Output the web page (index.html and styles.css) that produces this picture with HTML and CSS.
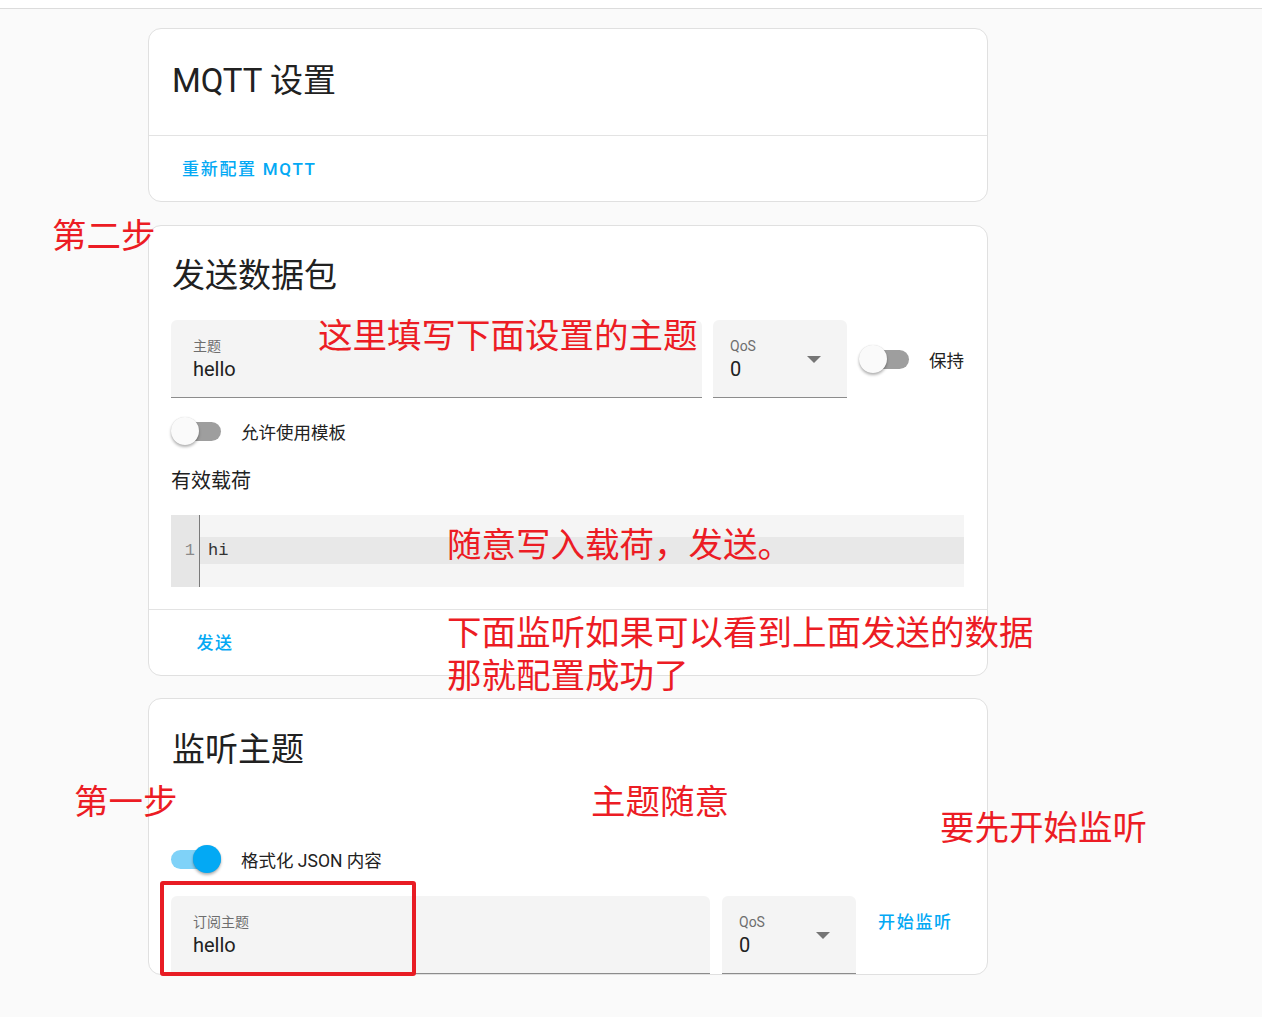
FILE: index.html
```html
<!DOCTYPE html>
<html lang="zh-CN">
<head>
<meta charset="utf-8">
<title>MQTT</title>
<link rel="stylesheet" href="styles.css">
</head>
<body>
<div class="topbar"></div>
<main class="content">
  <section class="card card-settings">
    <h1 class="card-title">MQTT 设置</h1>
    <div class="card-actions">
      <span class="btn">重新配置 MQTT</span>
    </div>
  </section>

  <section class="card card-publish">
    <h1 class="card-title">发送数据包</h1>
    <div class="card-content">
      <div class="field-row">
        <div class="field grow">
          <span class="field-label">主题</span>
          <span class="field-value">hello</span>
        </div>
        <div class="field select">
          <span class="field-label">QoS</span>
          <span class="field-value">0</span>
          <span class="arrow"></span>
        </div>
        <div class="switch-row retain">
          <span class="switch"><span class="track"></span><span class="knob"></span></span>
          <span class="switch-label">保持</span>
        </div>
      </div>
      <div class="switch-row tpl">
        <span class="switch"><span class="track"></span><span class="knob"></span></span>
        <span class="switch-label">允许使用模板</span>
      </div>
      <div class="payload-label">有效载荷</div>
      <div class="editor">
        <div class="gutter"><span class="lineno">1</span></div>
        <div class="code"><div class="line active">hi</div></div>
      </div>
    </div>
    <div class="card-actions">
      <span class="btn">发送</span>
    </div>
  </section>

  <section class="card card-listen">
    <h1 class="card-title">监听主题</h1>
    <div class="card-content listen-content">
      <div class="switch-row json">
        <span class="switch on"><span class="track"></span><span class="knob"></span></span>
        <span class="switch-label">格式化 JSON 内容</span>
      </div>
      <div class="field-row sub-row">
        <div class="field grow">
          <span class="field-label">订阅主题</span>
          <span class="field-value">hello</span>
        </div>
        <div class="field select">
          <span class="field-label">QoS</span>
          <span class="field-value">0</span>
          <span class="arrow"></span>
        </div>
        <span class="btn listen-btn">开始监听</span>
      </div>
    </div>
  </section>
</main>

<div class="note n-step2">第二步</div>
<div class="note n-topic">这里填写下面设置的主题</div>
<div class="note n-payload">随意写入载荷，发送。</div>
<div class="note n-check">下面监听如果可以看到上面发送的数据<br>那就配置成功了</div>
<div class="note n-step1">第一步</div>
<div class="note n-any">主题随意</div>
<div class="note n-first">要先开始监听</div>
<div class="redbox"></div>
</body>
</html>
```

FILE: styles.css
```css
html, body {
  margin: 0;
  padding: 0;
}
body {
  background: #fafafa;
  font-family: Roboto, "Noto Sans CJK SC", sans-serif;
  color: #212121;
  min-height: 1017px;
  position: relative;
  overflow: hidden;
}
.topbar {
  height: 8px;
  background: #ffffff;
  border-bottom: 1px solid #dcdcdc;
}
.content {
  width: 840px;
  margin-left: 148px;
  padding-top: 19px;
  display: flex;
  flex-direction: column;
}
.card {
  background: #ffffff;
  border: 1px solid #e0e0e0;
  border-radius: 13px;
  box-sizing: border-box;
}
.card-publish {
  margin-top: 23px;
}
.card-listen {
  margin-top: 22px;
}
.card-title {
  margin: 0;
  font-weight: 400;
  font-size: 33px;
  line-height: 48px;
  padding: 26px 23px 0 23px;
  color: #212121;
}
.card-settings .card-title {
  padding-top: 28px;
  padding-bottom: 30px;
}
.card-listen .card-title {
  padding-top: 27px;
}
.card-actions {
  border-top: 1px solid #e3e3e3;
  height: 65px;
  padding: 0 18px;
  display: flex;
  align-items: center;
}
.btn {
  min-width: 96px;
  box-sizing: border-box;
  padding: 0 15px;
  text-align: center;
  color: #03a9f4;
  font-size: 17px;
  font-weight: 500;
  letter-spacing: 0.09em;
  line-height: 44px;
}
.card-settings .btn {
  letter-spacing: 0.1em;
}
.card-content {
  padding: 20px 23px 22px 22px;
}
.field-row {
  display: flex;
  align-items: flex-start;
}
.field {
  position: relative;
  height: 78px;
  box-sizing: border-box;
  background: #f4f4f4;
  border-radius: 6px 6px 0 0;
  border-bottom: 1px solid #8c8c8c;
  padding: 18px 22px 0 22px;
  display: flex;
  flex-direction: column;
}
.grow {
  flex: 1;
}
.select {
  width: 134px;
  flex: none;
  padding-left: 17px;
  margin-left: 11px;
}
.field-label {
  font-size: 14px;
  line-height: 17px;
  color: #6e6e6e;
}
.field-value {
  font-size: 20px;
  line-height: 28px;
  color: #212121;
}
.arrow {
  position: absolute;
  right: 26px;
  top: 36px;
  width: 0;
  height: 0;
  border-left: 7px solid transparent;
  border-right: 7px solid transparent;
  border-top: 7px solid #757575;
}
.switch-row {
  display: flex;
  align-items: center;
  height: 48px;
}
.switch {
  position: relative;
  width: 50px;
  height: 28px;
  flex: none;
}
.track {
  position: absolute;
  left: 3px;
  right: 0;
  top: 5px;
  height: 19px;
  border-radius: 10px;
  background: #9e9e9e;
}
.knob {
  position: absolute;
  left: 0;
  top: 0;
  width: 28px;
  height: 28px;
  border-radius: 50%;
  background: #fafafa;
  box-shadow: 0 2px 3px rgba(0, 0, 0, 0.3), 0 0 1px rgba(0, 0, 0, 0.15);
}
.switch.on .track {
  background: #7fd2f8;
  left: 0;
}
.switch.on .knob {
  left: 22px;
  background: #03a9f4;
}
.switch-label {
  margin-left: 20px;
  font-size: 17.5px;
  color: #212121;
}
.retain {
  margin-left: 12px;
  height: 78px;
}
.tpl {
  margin-top: 9px;
}
.payload-label {
  margin-top: 12px;
  font-size: 20px;
  line-height: 28px;
}
.editor {
  margin-top: 20px;
  height: 72px;
  background: #f5f5f5;
  display: flex;
}
.gutter {
  width: 29px;
  background: #e6e6e6;
  border-right: 1px solid #7a7a7a;
  box-sizing: border-box;
  padding-top: 22px;
  text-align: right;
  padding-right: 4px;
}
.lineno {
  font-family: "Liberation Mono", monospace;
  font-size: 17px;
  line-height: 27px;
  color: #8a8a8a;
}
.code {
  flex: 1;
  padding-top: 22px;
}
.line {
  font-family: "Liberation Mono", monospace;
  font-size: 17px;
  line-height: 27px;
  padding-left: 8px;
  color: #333333;
}
.line.active {
  background: #e8e8e8;
}
.listen-content {
  padding-top: 61px;
  padding-bottom: 0;
}
.sub-row {
  margin-top: 13px;
}
.sub-row .select {
  margin-left: 12px;
}
.listen-btn {
  flex: none;
  width: 108px;
  min-width: 0;
  padding: 0 0 0 22px;
  text-align: left;
  line-height: 52px;
  letter-spacing: 0.1em;
  white-space: nowrap;
}

.note {
  position: absolute;
  color: #ec1c24;
  font-family: "Noto Sans CJK SC", sans-serif;
  font-size: 34.5px;
  line-height: 38px;
  white-space: nowrap;
}
.n-step2 { left: 52px; top: 214px; }
.n-topic { left: 318px; top: 314px; }
.n-payload { left: 447px; top: 523px; }
.n-check { left: 447px; top: 609px; line-height: 43px; }
.n-step1 { left: 74px; top: 780px; }
.n-any { left: 591px; top: 780px; }
.n-first { left: 940px; top: 806px; }
.redbox {
  position: absolute;
  left: 160px;
  top: 881px;
  width: 256px;
  height: 95px;
  box-sizing: border-box;
  border: 4px solid #e81c24;
  border-radius: 3px;
}
```
